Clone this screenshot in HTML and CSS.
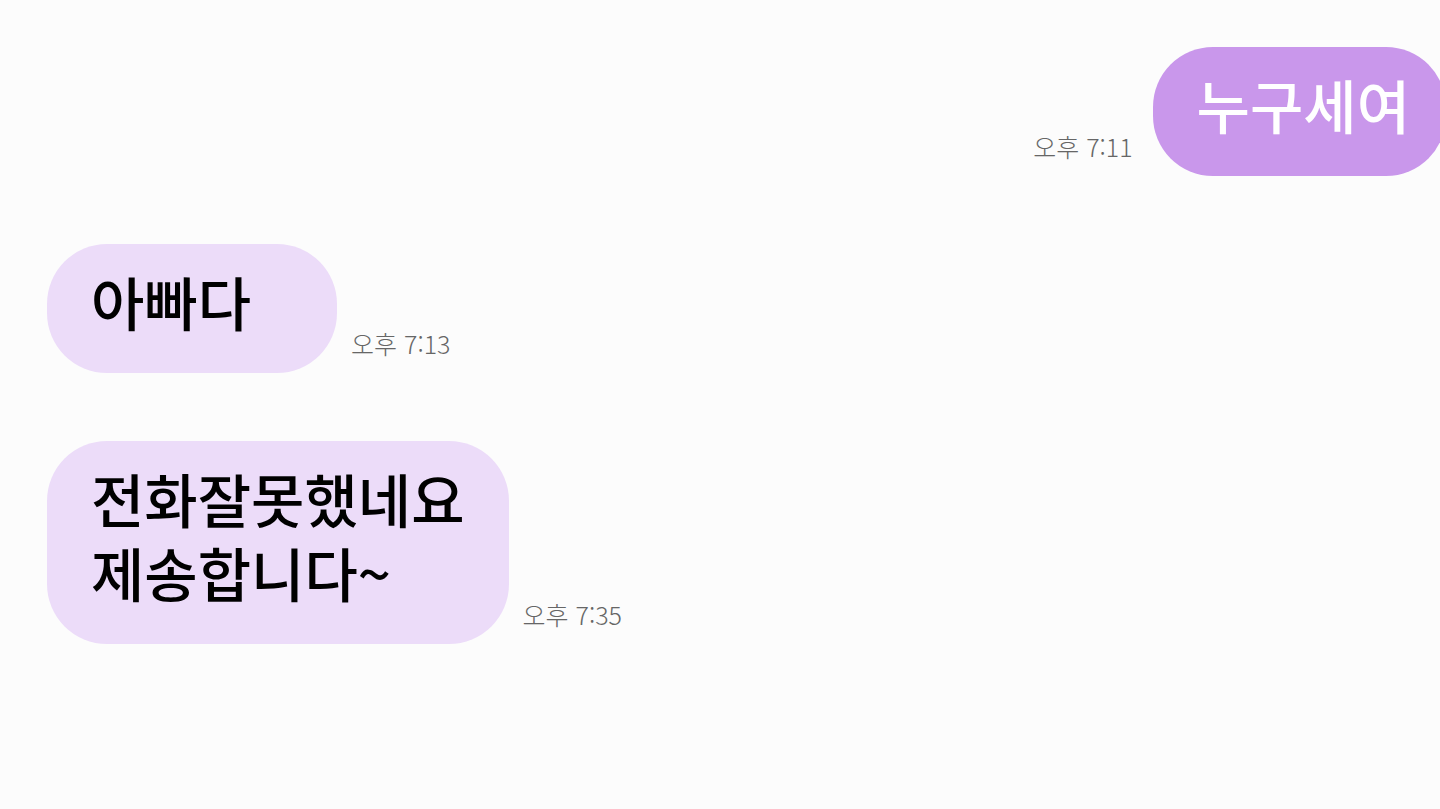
FILE: index.html
```html
<!DOCTYPE html>
<html lang="ko">
<head>
<meta charset="utf-8">
<meta name="viewport" content="width=device-width, initial-scale=1">
<title>메시지</title>
<link rel="stylesheet" href="styles.css">
</head>
<body>
<main class="chat">
  <article class="message sent">
    <p class="bubble">누구세여</p>
    <time class="time">오후 7:11</time>
  </article>
  <article class="message">
    <p class="bubble">아빠다</p>
    <time class="time">오후 7:13</time>
  </article>
  <article class="message">
    <p class="bubble">전화잘못했네요<br>제송합니다~</p>
    <time class="time">오후 7:35</time>
  </article>
</main>
</body>
</html>
```
FILE: styles.css
```css
* {
  box-sizing: border-box;
}

body {
  margin: 0;
  background: #fcfcfc;
  color: #000;
  font-family: "Noto Sans CJK KR", sans-serif;
  overflow-x: hidden;
}

.chat {
  display: flex;
  flex-direction: column;
  gap: 68px;
  padding: 47px 0 47px 47px;
}

.message {
  display: flex;
  align-items: flex-end;
  gap: 14px;
}

.sent {
  flex-direction: row-reverse;
  gap: 20px;
  margin-right: -6px;
}

.bubble {
  min-width: 290px;
  margin: 0;
  padding: 20px 44px 35px;
  border-radius: 60px;
  background: #ecdcf9;
  font-size: 58px;
  font-weight: 500;
  line-height: 74px;
  white-space: nowrap;
}

.sent .bubble {
  padding-right: 36px;
  background: #c997eb;
  color: #fff;
}

.time {
  padding-bottom: 10px;
  color: #666;
  font-size: 25px;
  font-weight: 300;
  line-height: 40px;
  white-space: nowrap;
}
```
